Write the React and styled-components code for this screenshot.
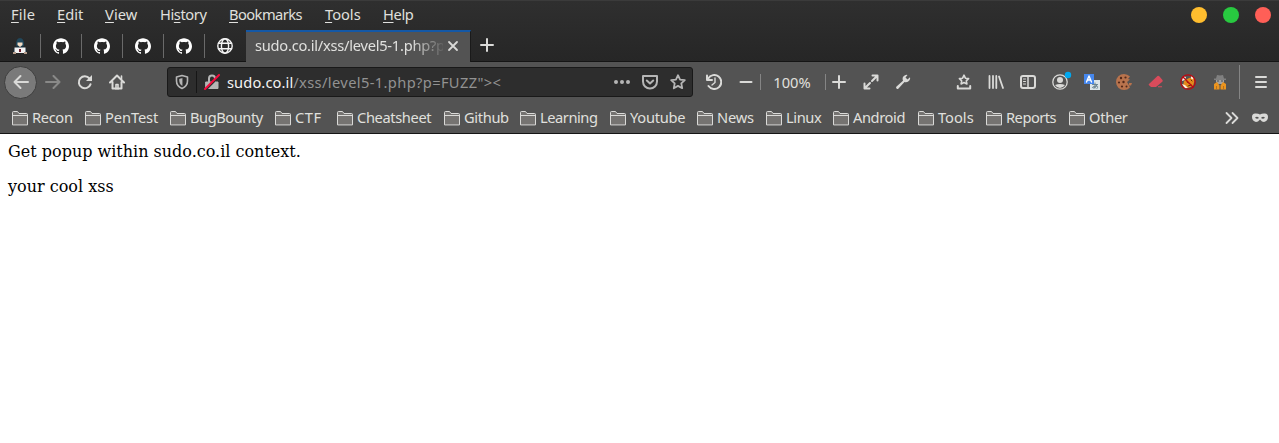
import React from 'react';
import styled, { createGlobalStyle } from 'styled-components';
import { SiGithub } from 'react-icons/si';

const GlobalStyle = createGlobalStyle`
  * { box-sizing: border-box; }
  body { margin: 0; background: #fff; overflow: hidden; }
`;

const Browser = styled.div`
  width: 1279px;
  height: 443px;
  display: flex;
  flex-direction: column;
  font: 14.67px/20px 'Noto Sans', sans-serif;
  color: #e0e0de;
  white-space: nowrap;
`;

const TitleArea = styled.header`
  height: 62px;
  flex: none;
  background: linear-gradient(#2f2f2f, #262626);
  border-top: 1px solid #3b3b3b;
  display: flex;
  flex-direction: column;
`;

const MenuBar = styled.nav`
  height: 29px;
  display: flex;
  align-items: flex-start;
  padding: 3px 0 0 11px;
`;

const MenuItem = styled.span`
  width: ${(p) => p.$w}px;
  letter-spacing: ${(p) => p.$ls || 0}px;
  u { text-decoration-thickness: 1px; text-underline-offset: 2px; }
`;

const WindowButtons = styled.div`
  display: flex;
  gap: 16px;
  margin-left: auto;
  padding: 3px 8px 0 0;
`;

const WindowButton = styled.span`
  width: 16px;
  height: 16px;
  border-radius: 50%;
  background: ${(p) => p.$color};
`;

const TabStrip = styled.div`
  height: 32px;
  display: flex;
`;

const PinnedTab = styled.div`
  width: 41px;
  height: 32px;
  display: flex;
  align-items: center;
  justify-content: center;
  padding-right: 1px;
  color: #fff;
  border-bottom: 1px solid #151515;
  background: ${(p) => (p.$last ? 'none' : 'linear-gradient(#6a6a6a, #6a6a6a) right 4px / 1px 24px no-repeat')};
  svg { display: block; }
`;

const ActiveTab = styled.div`
  width: 225px;
  height: 32px;
  display: flex;
  align-items: center;
  padding: 0 7px 2px 9px;
  background: #535353;
  border-top: 2px solid #1458a6;
  border-right: 1px solid #1a1a1a;
`;

const TabTitle = styled.span`
  width: 188px;
  flex: none;
  padding-bottom: 2px;
  letter-spacing: -0.25px;
  mask-image: linear-gradient(to right, #000 156px, transparent 191px);
`;

const StripRest = styled.div`
  flex: 1;
  display: flex;
  align-items: center;
  padding: 0 0 1px 8px;
  border-bottom: 1px solid #151515;
`;

const NavBar = styled.div`
  height: 40px;
  flex: none;
  display: flex;
  align-items: center;
  padding-left: 4px;
  background: #535353;
`;

const Slot = styled.span`
  width: ${(p) => p.$w || 32}px;
  height: 32px;
  margin-left: ${(p) => p.$ml || 0}px;
  flex: none;
  display: flex;
  align-items: center;
  justify-content: center;
  opacity: ${(p) => (p.$dim ? 0.4 : 1)};
`;

const BackButton = styled(Slot)`
  height: 33px;
  width: 33px;
  border: 1px solid #3e3e3e;
  border-radius: 50%;
  background: #7a7a7a;
`;

const Divider = styled.span`
  width: 1px;
  height: ${(p) => p.$h}px;
  flex: none;
  background: ${(p) => p.$color || '#858585'};
`;

const UrlBar = styled.div`
  width: 526px;
  height: 30px;
  margin-left: 34px;
  flex: none;
  display: flex;
  align-items: center;
  background: #2d2d2d;
  border: 1px solid #191919;
  border-radius: 3px;
`;

const Url = styled.span`
  flex: 1;
  color: #929292;
  letter-spacing: 0.37px;
  b { font-weight: 400; color: #f4f4f4; letter-spacing: 0.1px; }
`;

const ZoomLabel = styled.span`
  width: 64px;
  padding-right: 2px;
  text-align: center;
`;

const BookmarkBar = styled.div`
  height: 32px;
  flex: none;
  display: flex;
  align-items: center;
  padding-left: 12px;
  background: #535353;
  border-bottom: 1px solid #151515;
`;

const Bookmark = styled.span`
  width: ${(p) => p.$w}px;
  display: flex;
  align-items: center;
  gap: 4px;
  letter-spacing: ${(p) => p.$ls}px;
  svg { flex: none; }
`;

const BookmarkName = styled.span`
  padding-bottom: 2px;
`;

const Page = styled.main`
  padding: 8px;
  color: #000;
  font: 16px/19px 'DejaVu Serif', serif;
  p { margin: 16px 0; }
`;

const Icon = ({ children, size = 16, color = '#dadad8', sw = 2 }) => (
  <svg width={size} height={size} viewBox="0 0 16 16" fill="none" stroke={color} strokeWidth={sw} strokeLinecap="round" strokeLinejoin="round">
    {children}
  </svg>
);

const Folder = () => (
  <Icon sw={1}>
    <path d="M.5 14.500V2.500q0-1 1-1h4l1.500 2h7.500q1 0 1 1v10z" fill="#757371" />
    <path d="M1 5.500h14" />
  </Icon>
);

const Hacker = () => (
  <Icon sw={0}>
    <path d="M4 7q0-7 4-7t4 7l-1 2H5z" fill="#21475b" />
    <path d="M5.500 4.500h5V7L8 9 5.500 7z" fill="#f4dcc4" />
    <path d="M1 15q0-6 5-7l2 2 2-2q5 1 5 7z" fill="#182c3a" />
    <path d="M2.500 9.500h11v5.500h-11z" fill="#f4f4f4" />
    <path d="M7 11h2v3H7z" fill="#702030" />
    <path d="M1 14h3v2H1zM12 14h3v2h-3z" fill="#b89f8e" />
  </Icon>
);

const Globe = () => (
  <Icon color="#f4f4f4" sw={1.4}>
    <circle cx="8" cy="8" r="7.200" />
    <ellipse cx="8" cy="8" rx="3.600" ry="7.200" />
    <path d="M1.500 5.200h13M1.500 10.800h13" />
  </Icon>
);

const Plus = () => <Icon><path d="M8 2v12M2 8h12" /></Icon>;
const star = 'M8 1.200l2.050 4.350 4.750.600-3.500 3.300.9 4.750L8 11.900l-4.200 2.300.9-4.750-3.500-3.300 4.750-.6z';

const Cookie = () => (
  <Icon sw={0}>
    <path d="M8 0q3.500 0 6 2.500L12 5l2 .5L11 8l1.500 2.500 1.500 3Q11.500 16 8 16A8 8 0 0 1 8 0z" fill="#b8734d" />
    <path d="M13 9h3l-1 2.500h-2z" fill="#b8734d" />
    <g fill="#512819">
      <circle cx="5" cy="4" r="1.200" /><circle cx="9.500" cy="3.500" r="1.100" /><circle cx="3" cy="8.500" r="1.100" />
      <circle cx="7.500" cy="8" r="1.200" /><circle cx="6" cy="12.500" r="1.100" /><circle cx="10.500" cy="12.500" r="1" />
    </g>
  </Icon>
);

const BlockedFox = () => (
  <Icon>
    <path d="M4 7l5-3 4-1 1.500 4-1.500 5-5 2-5-2z" fill="#e58a1c" stroke="none" />
    <path d="M3 2l3 1-1 3-3 1zM11 1.500l3 2-1 2-2-1zM2 10l3 1 3 3-3 .5z" fill="#fff0e0" stroke="none" />
    <path d="M7 8l2 1M11 6l1 1M8 12l3-1" stroke="#65320b" strokeWidth="1" />
    <circle cx="8" cy="8" r="7.200" stroke="#bd0710" strokeWidth="1.300" />
    <path d="M3 3l10 10" stroke="#bd0710" strokeWidth="1.200" />
  </Icon>
);

const Spy = () => (
  <Icon sw={0}>
    <path d="M5 1l3 .5L11 1l1 3.500h2V6H2V4.500h2z" fill="#808080" />
    <path d="M4 6h8v2l-2 2H6L4 8z" fill="#a2a2a2" />
    <path d="M5 6.500h2v1H5zM9 6.500h2v1H9z" fill="#4b4b4b" />
    <path d="M2 10l3-2 2.500 3.500v4H2zM14 10l-3-2-2.500 3.500v4H14z" fill="#eb941e" />
    <path d="M4 12h.7v3H4zM11.300 12h.7v3h-.7z" fill="#9a6423" />
  </Icon>
);

const menus = [['', 'F', 'ile', 46, 0.2], ['', 'E', 'dit', 48, 0], ['', 'V', 'iew', 55, 0.1], ['Hi', 's', 'tory', 69, -0.4], ['', 'B', 'ookmarks', 96, -0.55], ['', 'T', 'ools', 58, 0], ['', 'H', 'elp', 50, -0.35]];
const bookmarks = [['Recon', 73, -0.35], ['PenTest', 85, -0.1], ['BugBounty', 105, -0.45], ['CTF', 62, 0.5], ['Cheatsheet', 107, -0.38], ['Github', 76, -0.35], ['Learning', 90, -0.45], ['Youtube', 87, -0.25], ['News', 69, -0.2], ['Linux', 67, -0.4], ['Android', 85, -0.4], ['Tools', 68, 0], ['Reports', 83, -0.5], ['Other', 80, -0.3]];

export default function App() {
  return (
    <Browser>
      <GlobalStyle />
      <TitleArea>
        <MenuBar>
          {menus.map(([pre, key, post, w, ls]) => <MenuItem key={key + post} $w={w} $ls={ls}>{pre}<u>{key}</u>{post}</MenuItem>)}
          <WindowButtons>
            <WindowButton $color="#ffbd2e" />
            <WindowButton $color="#28c940" />
            <WindowButton $color="#ff5f57" />
          </WindowButtons>
        </MenuBar>
        <TabStrip>
          <PinnedTab><Hacker /></PinnedTab>
          {[1, 2, 3, 4].map((n) => <PinnedTab key={n}><SiGithub size={16} /></PinnedTab>)}
          <PinnedTab $last><Globe /></PinnedTab>
          <ActiveTab>
            <TabTitle>sudo.co.il/xss/level5-1.php?p</TabTitle>
            <Slot $w={20}><Icon><path d="M4 4l8 8M12 4l-8 8" strokeWidth="1.800" /></Icon></Slot>
          </ActiveTab>
          <StripRest><Plus /></StripRest>
        </TabStrip>
      </TitleArea>
      <NavBar>
        <BackButton><Icon><path d="M15 8H1.500M7.500 2L1.500 8l6 6" /></Icon></BackButton>
        <Slot $dim><Icon><path d="M1 8h13.500M8.500 2l6 6-6 6" /></Icon></Slot>
        <Slot><Icon><path d="M13.500 10.300A6 6 0 1 1 12.500 4.500" /><path d="M15 1v6H9z" fill="#dadad8" stroke="none" /></Icon></Slot>
        <Slot><Icon><path d="M1 8.500L8 1.500l7 7M3.500 8v6.500h9V8" /><path d="M7 15v-4.500h2V15M12.500 2v3" strokeWidth="1.600" /></Icon></Slot>
        <UrlBar>
          <Slot $w={28}><Icon color="#b5b5b5" sw={1.6}><path d="M8 1.500l5.500 1.500v4q0 5-5.500 7.500Q2.500 12 2.500 7V3z" /><path d="M8 4.500l-2.500.6v2q0 3 2.500 4.300z" fill="#b5b5b5" strokeWidth=".5" /></Icon></Slot>
          <Divider $h={22} $color="#161616" />
          <Slot $w={30}><Icon color="#b5b5b5"><path d="M2 8h12v6.500H2z" fill="#b5b5b5" strokeWidth="1" /><path d="M5 8V4.500a3 3 0 0 1 6 0V8" /><path d="M1.500 16L16 1.500" stroke="#2d2d2d" /><path d="M1 15L15 1" stroke="#f50b3d" /></Icon></Slot>
          <Url><b>sudo.co.il</b>/xss/level5-1.php?p=FUZZ"&gt;&lt;</Url>
          <Slot $w={28}><Icon sw={0}><g fill="#b5b5b5"><circle cx="2" cy="8" r="2" /><circle cx="8" cy="8" r="2" /><circle cx="14" cy="8" r="2" /></g></Icon></Slot>
          <Slot $w={28}><Icon color="#b5b5b5"><path d="M1 2h14v5.500a7 7 0 0 1-14 0z" /><path d="M4.800 6.500L8 9.500l3.200-3" /></Icon></Slot>
          <Slot $w={28}><Icon color="#b5b5b5" sw={1.8}><path d={star} /></Icon></Slot>
        </UrlBar>
        <Slot $ml={5}><Icon><path d="M2.200 4.500A7 7 0 1 1 2.500 12M1 1.500V6h5" /><path d="M9 4v4.500L6 11" strokeWidth="1.400" /></Icon></Slot>
        <Slot $w={30}><Icon><path d="M3.500 8h11" /></Icon></Slot>
        <Divider $h={16} />
        <ZoomLabel>100%</ZoomLabel>
        <Divider $h={16} />
        <Slot $w={26}><Plus /></Slot>
        <Slot $ml={3}><Icon><path d="M9 7L14 2M9.500 1.500h5v5M7 9L2 14M1.500 9.500v5h5" /></Icon></Slot>
        <Slot><Icon sw={0}><path d="M1.500 12.500L8 6.800Q6.500 3 10 1.200q1.500-.6 2.500-.1L10.500 3.500l2 2 2.500-2.200q.5 1.500-.5 3-2 2.700-5 1.700l-6 6.500q-1 1-2 0t0-2z" fill="#dadad8" /></Icon></Slot>
        <Slot $ml={29}><Icon sw={1.6}><path d="M8 1.200l1.400 3 3.200.4-2.300 2.200.6 3.200L8 8.500 5.100 10l.6-3.200-2.300-2.200 3.200-.4z" /><path d="M1.800 12v2.500h12.400V12" strokeWidth="2" /></Icon></Slot>
        <Slot><Icon><path d="M1.500 2v12M5 2v12M8.300 2v12M11 2.500l4 11.500" strokeWidth="1.800" /></Icon></Slot>
        <Slot><Icon><rect x="1" y="2" width="14" height="12" rx="2" /><path d="M8 2v12" strokeWidth="1.500" /><path d="M3.500 5h2M3.500 7.500h2M3.500 10h2" strokeWidth="1" /></Icon></Slot>
        <Slot>
          <svg width="24" height="24" viewBox="-4 -4 24 24" fill="none">
            <circle cx="8" cy="8" r="7.200" stroke="#dadad8" strokeWidth="1.300" />
            <circle cx="8" cy="6" r="3" fill="#dadad8" />
            <path d="M3 11q5-2 10 0-2 3-5 3t-5-3z" fill="#dadad8" />
            <circle cx="16" cy="1" r="3.200" fill="#00a8f0" />
          </svg>
        </Slot>
        <Slot>
          <Icon sw={0}>
            <path d="M6 6h10v10H6z" fill="#dbe4e8" /><path d="M0 0h10v10H0z" fill="#4687ed" />
            <path d="M2.500 8L5 2l2.500 6M3.500 6h3" stroke="#fff" strokeWidth="1.400" />
            <path d="M8.500 10.500h5M11 9v5M13 11q-2 4-4 3t3-2q3 0 1 2.500" stroke="#6b8490" strokeWidth="1" />
          </Icon>
        </Slot>
        <Slot><Cookie /></Slot>
        <Slot><Icon sw={0}><path d="M1 10L9.500 2q1-.6 1.800.2L14.500 6q.6 1-.2 1.700L8 13H3L.8 11q-.4-.5.2-1zM10 12.300h4v1h-4z" fill="#d94b5b" /></Icon></Slot>
        <Slot><BlockedFox /></Slot>
        <Slot><Spy /></Slot>
        <Slot $w={3} />
        <Divider $h={34} />
        <Slot $ml={5}><Icon><path d="M3 3h10M3 8h10M3 13h10" /></Icon></Slot>
      </NavBar>
      <BookmarkBar>
        {bookmarks.map(([name, w, ls]) => <Bookmark key={name} $w={w} $ls={ls}><Folder /><BookmarkName>{name}</BookmarkName></Bookmark>)}
        <Slot $w={28} $ml={69}><Icon><path d="M2.500 3l5 5-5 5M8.500 3l5 5-5 5" strokeWidth="1.800" /></Icon></Slot>
        <Slot $w={28}><Icon sw={0}><path fillRule="evenodd" d="M0 7q0-4 4-3.500 2.500 0 4 1 1.500-1 4-1Q16 3 16 7t-4 5q-2 0-4-2.500Q6 12 4 12 0 11 0 7zm3 .8Q5 9.700 7 8 5 5.500 3 7.800zm6 .2q2 1.700 4-.2-2-2.300-4 .2z" fill="#dadad8" /></Icon></Slot>
      </BookmarkBar>
      <Page>
        Get popup within sudo.co.il context.
        <p>your cool xss</p>
      </Page>
    </Browser>
  );
}
